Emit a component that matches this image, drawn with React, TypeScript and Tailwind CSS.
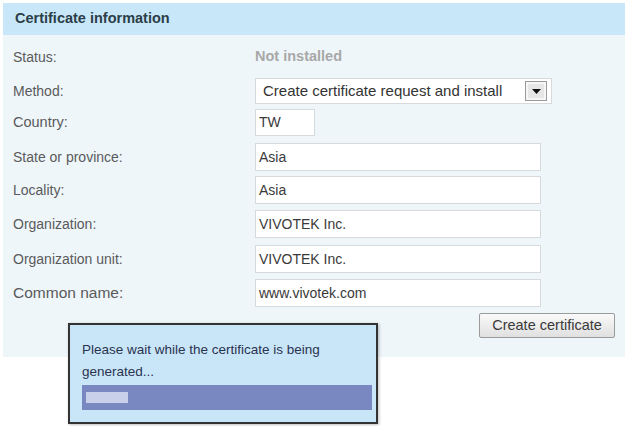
import React from "react";

type Field = { label: string; value: string; mt: string; labelSize?: string };

const fields: Field[] = [
  { label: "State or province:", value: "Asia", mt: "mt-[7px]" },
  { label: "Locality:", value: "Asia", mt: "mt-[5px]" },
  { label: "Organization:", value: "VIVOTEK Inc.", mt: "mt-[6px]" },
  { label: "Organization unit:", value: "VIVOTEK Inc.", mt: "mt-[7px]" },
  { label: "Common name:", value: "www.vivotek.com", mt: "mt-[6px]", labelSize: "text-[15.5px]" },
];

function Label({ children, size = "text-[14px]" }: { children: React.ReactNode; size?: string }) {
  return <div className={`w-[242px] ${size} text-[#5a5a5a]`}>{children}</div>;
}

function TextBox({ value, width }: { value: string; width: string }) {
  return (
    <div
      className={`${width} h-[28px] bg-white border border-[#d6dadc] flex items-center px-[3px] text-[14px] text-[#3a3a3a]`}
    >
      {value}
    </div>
  );
}

export default function App() {
  return (
    <div
      className="w-[629px] h-[426px] bg-white relative overflow-hidden pt-[3px] px-[3px]"
      style={{ fontFamily: '"Liberation Sans", Arial, sans-serif' }}
    >
      <div className="w-[622px] bg-[#eef6fa]">
        <div className="h-[32px] bg-[#c8e8fa] flex items-center pl-[12px] text-[14.5px] font-bold text-[#2c3e48]">
          Certificate information
        </div>

        <div className="pl-[10px] pr-[10px] pt-[12px] pb-[19px] flex flex-col">
          <div className="flex items-center h-[20px]">
            <Label>Status:</Label>
            <div className="text-[14.5px] font-bold text-[#a8a8a8]">Not installed</div>
          </div>

          <div className="flex items-center mt-[11px]">
            <Label>Method:</Label>
            <div className="w-[297px] h-[26px] bg-white border border-[#d6dadc] flex items-center justify-between pl-[7px] pr-[4px] text-[15px] text-[#333]">
              <span>Create certificate request and install</span>
              <span className="w-[22px] h-[20px] border border-[#9a9a9a] bg-[#e6e6e6] flex items-center justify-center shadow-[inset_0_0_0_2px_#f6f6f6]">
                <svg width="9" height="5" viewBox="0 0 9 5">
                  <path d="M0 0 L9 0 L4.5 5 Z" fill="#111" />
                </svg>
              </span>
            </div>
          </div>

          <div className="flex items-center mt-[5px]">
            <Label size="text-[14.5px]">Country:</Label>
            <div className="w-[60px] h-[27px] bg-white border border-[#d6dadc] flex items-center px-[3px] text-[14px] text-[#3a3a3a]">
              TW
            </div>
          </div>

          {fields.map((f) => (
            <div key={f.label} className={`flex items-center ${f.mt}`}>
              <Label size={f.labelSize}>{f.label}</Label>
              <TextBox value={f.value} width="w-[286px]" />
            </div>
          ))}

          <div className="flex justify-end mt-[6px]">
            <button className="w-[136px] h-[25px] rounded-[2px] border border-[#9a9a9a] bg-gradient-to-b from-[#fafafa] to-[#e0e0e0] text-[14.5px] text-[#3a3a3a]">
              Create certificate
            </button>
          </div>
        </div>
      </div>

      <div className="absolute left-[68px] top-[323px] w-[310px] h-[101px] border-2 border-[#333] bg-[#c9e6f8] pl-[12px] pr-[4px] pt-[14px] shadow-[1px_1px_3px_rgba(0,0,0,0.25)]">
        <div className="text-[13.5px] leading-[22px] text-[#2a3350]">
          Please wait while the certificate is being
          <br />
          generated...
        </div>
        <div className="mt-[2px] h-[25px] bg-[#7a88c2] flex items-center px-[4px]">
          <div className="w-[42px] h-[11px] bg-[#c8d0ea]" />
        </div>
      </div>
    </div>
  );
}
